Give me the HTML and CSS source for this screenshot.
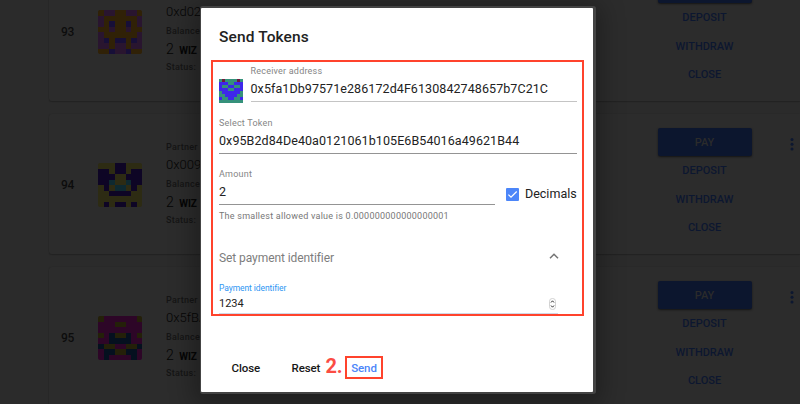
FILE: index.html
```
<!DOCTYPE html>
<html lang="en">
<head>
<meta charset="utf-8">
<title>Send Tokens</title>
<link rel="stylesheet" href="styles.css">
</head>
<body>
<main class="channels" id="channels"></main>
<section class="dialog" role="dialog">
  <h1>Send Tokens</h1>
  <div class="highlight">
    <div class="receiver">
      <span class="blockie small" id="receiver-icon"></span>
      <div class="field grow">
        <div class="label">Receiver address</div>
        <div class="value address">0x5fa1Db97571e286172d4F6130842748657b7C21C</div>
      </div>
    </div>
    <div class="field token">
      <div class="label">Select Token</div>
      <div class="value">0x95B2d84De40a0121061b105E6B54016a49621B44</div>
    </div>
    <div class="amount-row">
      <div class="field amount">
        <div class="label">Amount</div>
        <div class="value">2</div>
      </div>
      <div class="decimals">
        <svg class="check" viewBox="0 0 13 13"><rect width="13" height="13" rx="1" fill="#4c86f9"/><path d="M2.4 6.6 5 9.2 10.7 3.5" fill="none" stroke="#fff" stroke-width="1.2"/></svg>
        <span>Decimals</span>
      </div>
    </div>
    <div class="hint">The smallest allowed value is 0.000000000000000001</div>
    <div class="panel-head">
      <span>Set payment identifier</span>
      <svg class="chevron" viewBox="0 0 10 6"><path d="M1 5.2 5 1.3 9 5.2" fill="none" stroke="#757575" stroke-width="1.5"/></svg>
    </div>
    <div class="identifier">
      <div class="label">Payment identifier</div>
      <div class="number">
        <span>1234</span>
        <svg class="spinner" viewBox="0 0 7 12"><rect x=".5" y=".5" width="6" height="11" rx="2.8" fill="#fff" stroke="#c6c6c6" stroke-width=".8"/><path d="M2 4.5 3.5 2.8 5 4.5M2 7.5 3.5 9.2 5 7.5" fill="none" stroke="#333" stroke-width="1"/></svg>
      </div>
    </div>
  </div>
  <div class="actions">
    <span class="close">Close</span>
    <span class="reset">Reset</span>
    <span class="step">2.</span>
    <span class="send">Send</span>
  </div>
</section>
<script src="app.js"></script>
</body>
</html>
```
FILE: styles.css
```
* { box-sizing: border-box; }
body {
  margin: 0;
  width: 800px;
  height: 404px;
  overflow: hidden;
  position: relative;
  background: #2b2b2b;
  font-family: Roboto, "Liberation Sans", sans-serif;
}
.channels {
  display: flex;
  flex-direction: column;
  gap: 13px;
  margin-top: -39px;
  padding-left: 49px;
}
.card {
  flex: none;
  height: 140px;
  display: flex;
  background: #2c2c2c;
  border-radius: 3px 0 0 3px;
  box-shadow: 0 1px 1px #222, 0 0 1px #252525;
}
.index {
  width: 49px;
  padding: 64px 0 0 12px;
  font-size: 12px;
  line-height: 14px;
  font-weight: 500;
  letter-spacing: -0.4px;
  color: #0c0c0c;
}
.blockie {
  display: block;
  flex: none;
  width: 44px;
  height: 44px;
  border-radius: 2px;
  overflow: hidden;
}
.blockie svg { display: block; width: 100%; height: 100%; }
.card .blockie { margin-top: 48.5px; }
.info {
  width: 140px;
  margin-left: 24px;
  padding-top: 27px;
  white-space: nowrap;
}
.caption {
  height: 12px;
  font-size: 9px;
  line-height: 12px;
  font-weight: 500;
  letter-spacing: .25px;
  color: #151515;
}
.partner { font-size: 13px; line-height: 15px; margin: 4px 0 6px; font-weight: 300; color: #050505; }
.balance { font-size: 14px; line-height: 16px; margin: 4px 0 2px; font-weight: 300; color: #050505; }
.balance b { font-size: 10px; font-weight: 700; margin-left: 2px; }
.buttons {
  width: 94px;
  margin-left: auto;
  margin-right: 38px;
  padding-top: 14px;
  text-align: center;
  font-size: 11px;
  font-weight: 500;
  color: #0c1730;
}
.pay {
  height: 28px;
  line-height: 29px;
  border-radius: 2px;
  background: #0c162e;
  color: #2b2b2b;
  box-shadow: 0 1px 2px #151515;
}
.buttons .link { height: 28.5px; line-height: 29px; }
.dots { width: 4px; height: 15px; margin: 23px 6.5px 0 0; fill: #0c1730; }

.dialog {
  position: absolute;
  left: 201px;
  top: 8px;
  width: 392px;
  height: 384px;
  background: #fff;
  border-radius: 1px;
  box-shadow: 1px 0 0 2px #444, 0 5px 24px 8px rgba(0, 0, 0, .3);
}
h1 {
  margin: 0;
  padding: 20px 0 0 18px;
  height: 52px;
  font-size: 15.5px;
  line-height: 19px;
  font-weight: 500;
  letter-spacing: .12px;
  color: #222;
}
.highlight {
  width: 373px;
  height: 256px;
  margin-left: 10px;
  padding: 3px 5px 0 6px;
  border: 2px solid #ff432c;
}
.label { font-size: 9px; line-height: 12px; color: #858585; letter-spacing: .21px; }
.value {
  height: 25px;
  padding-top: 4px;
  border-bottom: 1px solid #949494;
  font-size: 12.5px;
  line-height: 15px;
  letter-spacing: .08px;
  color: #222;
}
.receiver { display: flex; gap: 7.5px; height: 52px; }
.receiver .value { padding-top: 4px; }
.small { width: 24px; height: 24px; margin-top: 14px; border-radius: 0; }
.grow { flex: 1; }
.address { border-color: #c4c4c4; }
.token { height: 51px; }
.amount-row { display: flex; }
.amount { width: 275.5px; }
.decimals {
  display: flex;
  gap: 6.5px;
  padding: 18px 0 0 11px;
  font-size: 12.5px;
  line-height: 15px;
  color: #222;
}
.check { width: 13px; height: 13px; margin-top: 1.5px; }
.hint {
  margin-top: 5px;
  font-size: 9px;
  line-height: 12px;
  letter-spacing: .24px;
  white-space: nowrap;
  color: #777;
}
.panel-head {
  display: flex;
  justify-content: space-between;
  margin: 29px 18px 0 0;
  font-size: 12px;
  line-height: 15px;
  letter-spacing: -.08px;
  color: #7d7d7d;
}
.chevron { width: 10px; height: 6px; margin-top: 2px; }
.identifier { width: 339px; margin-top: 16px; }
.identifier .label { font-size: 8.5px; color: #2f96f3; letter-spacing: -.08px; }
.number {
  display: flex;
  justify-content: space-between;
  height: 20px;
  padding: 1.5px 2px 0 0;
  border-bottom: 1px solid #cfd8e8;
  font-size: 11px;
  line-height: 15px;
  color: #222;
}
.spinner { width: 7px; height: 12px; margin-top: 2px; }
.actions {
  display: flex;
  align-items: center;
  height: 24px;
  margin: 39.5px 0 0 30.5px;
  font-size: 11.5px;
  font-weight: 500;
  letter-spacing: -.1px;
  color: #171717;
}
.close { width: 60px; }
.reset { width: 34px; }
.step { width: 19.5px; font-size: 20px; font-weight: 700; line-height: 20px; margin-top: -3px; color: #fb4c43; }
.send {
  width: 38px;
  height: 23px;
  border: 2px solid #ff432c;
  text-align: center;
  line-height: 20px;
  color: #4c86f9;
}
```
FILE: app.js
```
function blockie(rows, colors) {
  let cells = '';
  rows.forEach((row, y) => [...row].forEach((c, x) => {
    cells += `<rect x="${x}" y="${y}" width="1" height="1" fill="${colors[c]}"/>`;
  }));
  return `<svg viewBox="0 0 8 8" shape-rendering="crispEdges">${cells}</svg>`;
}

// The first card is scrolled partly out of view, so its top labels stay empty.
const channels = [
  { id: 93, caption: '', pay: '&nbsp;', partner: '0xd02', colors: { o: '#302107', p: '#29152f', b: '#170f38' },
    rows: ['oppooppo', 'poooooop', 'poboobop', 'oopoopoo', 'poooooop', 'pbobbobp', 'ppoppopp', 'oobppboo'] },
  { id: 94, caption: 'Partner', pay: 'PAY', partner: '0x009', colors: { y: '#2d2b13', n: '#0e0525', t: '#0e2930' },
    rows: ['yyynnyyy', 'nnynnynn', 'nnnyynnn', 'nntyytnn', 'ynyttyny', 'yynnnnyy', 'yyyyyyyy', 'ynynnyny'] },
  { id: 95, caption: 'Partner', pay: 'PAY', partner: '0x5fBA', colors: { m: '#2d0627', g: '#242009', n: '#05101f' },
    rows: ['gmmmmmmg', 'mmmggmmm', 'mmmmmmmm', 'gmnggnmg', 'mmnnnnmm', 'nggmmggn', 'mnnggnnm', 'mnmmmmnm'] }
];

document.getElementById('channels').innerHTML = channels.map(c => `
  <article class="card">
    <div class="index">${c.id}</div>
    <span class="blockie">${blockie(c.rows, c.colors)}</span>
    <div class="info">
      <div class="caption">${c.caption}</div>
      <div class="partner">${c.partner}</div>
      <div class="caption">Balance</div>
      <div class="balance">2 <b>WIZ</b></div>
      <div class="caption">Status:</div>
    </div>
    <div class="buttons">
      <div class="pay">${c.pay}</div>
      <div class="link">DEPOSIT</div>
      <div class="link">WITHDRAW</div>
      <div class="link">CLOSE</div>
    </div>
    <svg class="dots" viewBox="0 0 4 15"><circle cx="2" cy="2.5" r="1.5"/><circle cx="2" cy="7.3" r="1.5"/><circle cx="2" cy="12.1" r="1.5"/></svg>
  </article>`).join('');

document.getElementById('receiver-icon').innerHTML = blockie(
  ['trttttrt', 'bbbttbbb', 'bttbbttb', 'bbbttbbb', 'tbbbbbbt', 'ttbbbbtt', 'bttbbttb', 'tttttttt'],
  { t: '#35917b', b: '#3e27ea', r: '#701b3c' });
```
